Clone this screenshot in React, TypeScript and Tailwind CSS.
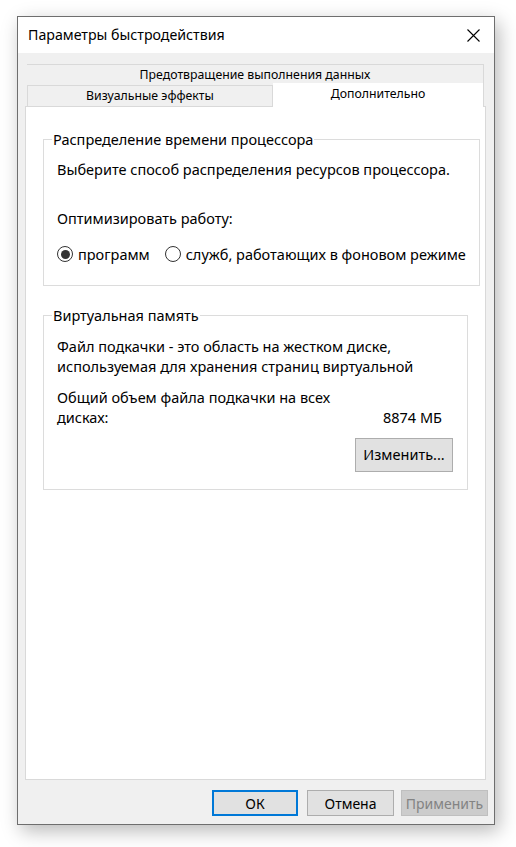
import React from 'react'

const font = { fontFamily: '"Noto Sans", "Liberation Sans", sans-serif' }

const Radio = ({ checked, label }: { checked?: boolean; label: string }) => (
  <label className="flex items-center gap-[5px] whitespace-nowrap">
    <span className="flex h-[16px] w-[16px] items-center justify-center rounded-full border-[1.5px] border-[#333333] bg-white">
      {checked && <span className="h-[9px] w-[9px] rounded-full bg-[#333333]" />}
    </span>
    <span>{label}</span>
  </label>
)

const DlgButton = ({ label, primary, disabled, className = '' }: { label: string; primary?: boolean; disabled?: boolean; className?: string }) => (
  <button
    className={`flex items-center justify-center ${
      disabled
        ? 'border border-[#bfbfbf] bg-[#cccccc] text-[#838383]'
        : primary
          ? 'border-2 border-[#0078d7] bg-[#e1e1e1] text-black'
          : 'border border-[#adadad] bg-[#e1e1e1] text-black'
    } ${className}`}
  >
    {label}
  </button>
)

const GroupBox = ({ title, children, className = '' }: { title: string; children: React.ReactNode; className?: string }) => (
  <fieldset className={`mx-[17px] border border-[#dcdcdc] px-[13px] ${className}`}>
    <legend className="-ml-[5px] px-[1px] leading-[20px]">{title}</legend>
    {children}
  </fieldset>
)

export default function App() {
  return (
    <div className="min-h-[847px] bg-white pl-[17px] pt-[16px] text-[14.5px] text-black" style={font}>
      <div className="flex h-[809px] w-[478px] flex-col border border-[#6e6e6e] bg-[#f0f0f0] shadow-[4px_6px_18px_rgba(0,0,0,0.28)]">
        {/* Title bar */}
        <div className="flex h-[36px] items-center justify-between bg-white pl-[10px] pr-[14px]">
          <span className="text-[14.2px] leading-none">Параметры быстродействия</span>
          <svg width="13" height="13" viewBox="0 0 13 13" className="text-black">
            <path d="M0.5 0.5 L12.5 12.5 M12.5 0.5 L0.5 12.5" stroke="currentColor" strokeWidth="1.1" fill="none" />
          </svg>
        </div>

        {/* Tabs */}
        <div className="flex flex-1 flex-col px-[7px] pt-[11px] pr-[8px]">
          <div className="mx-[2px] flex h-[21px] items-center justify-center border-t border-r border-[#d9d9d9] text-[12.3px] leading-none">
            Предотвращение выполнения данных
          </div>
          <div className="mx-[2px] flex h-[21px] items-end">
            <div className="flex h-[21px] w-[246px] items-center justify-center border-t border-l border-r border-[#d9d9d9] bg-[#f0f0f0] text-[12.3px] leading-none">
              Визуальные эффекты
            </div>
            <div className="relative z-10 -mb-px flex h-[24px] flex-1 items-center justify-center border-r border-[#d9d9d9] bg-white pb-[2px] text-[12.3px] leading-none">
              Дополнительно
            </div>
          </div>

          {/* Panel */}
          <div className="flex flex-1 flex-col border border-[#d9d9d9] bg-white pt-[22px]">
            <GroupBox title="Распределение времени процессора" className="pb-[21px]">
              <p className="mt-[10px] whitespace-nowrap leading-[20px]">Выберите способ распределения ресурсов процессора.</p>
              <p className="mt-[29px] whitespace-nowrap leading-[20px]">Оптимизировать работу:</p>
              <div className="mt-[16px] flex items-center gap-[15px] leading-[20px]">
                <Radio checked label="программ" />
                <Radio label="служб, работающих в фоновом режиме" />
              </div>
            </GroupBox>

            <GroupBox title="Виртуальная память" className="mt-[19px] pb-[17px]">
              <p className="mt-[11px] whitespace-nowrap leading-[20px]">
                Файл подкачки - это область на жестком диске,
                <br />
                используемая для хранения страниц виртуальной
              </p>
              <div className="mt-[11px] flex items-end justify-between pr-[12px] leading-[20px]">
                <p className="w-[290px]">
                  Общий объем файла подкачки на всех
                  <br />
                  дисках:
                </p>
                <span>8874 МБ</span>
              </div>
              <div className="mt-[11px] flex justify-end pr-[1px]">
                <DlgButton label="Изменить..." className="h-[34px] w-[98px]" />
              </div>
            </GroupBox>
          </div>
        </div>

        {/* Bottom buttons */}
        <div className="flex items-center justify-end pb-[8px] pr-[6px] pt-[10px] text-[14px]">
          <DlgButton primary label="ОК" className="h-[26px] w-[86px]" />
          <DlgButton label="Отмена" className="ml-[9px] h-[26px] w-[87px]" />
          <DlgButton disabled label="Применить" className="ml-[7px] h-[26px] w-[87px]" />
        </div>
      </div>
    </div>
  )
}
